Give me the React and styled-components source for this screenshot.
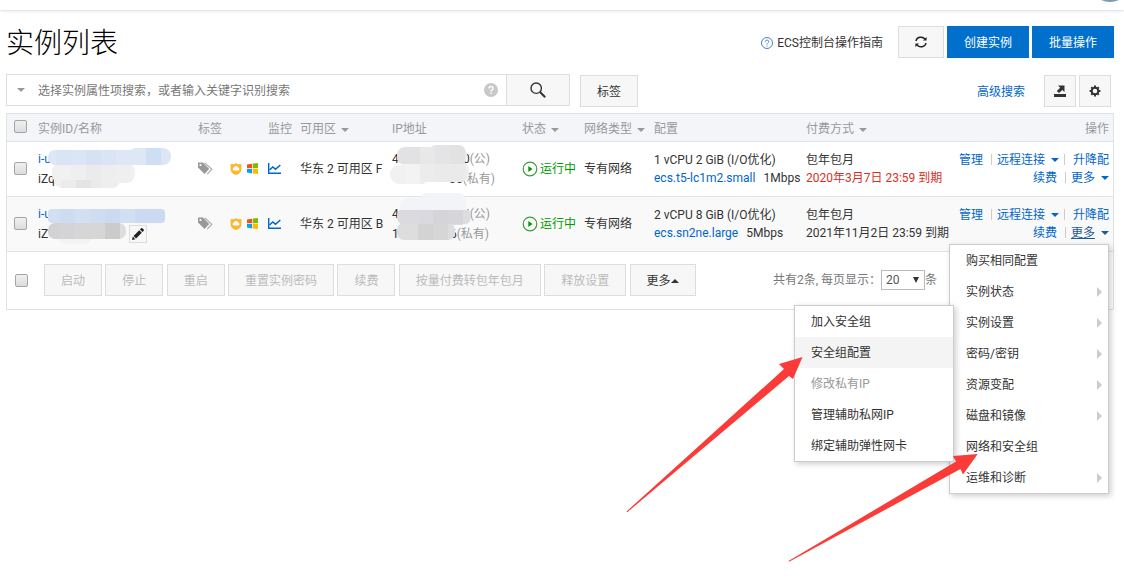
import React from "react";
import styled, { createGlobalStyle, css } from "styled-components";

const Global = createGlobalStyle`
  * { box-sizing: border-box; }
  body {
    margin: 0;
    background: #fff;
    color: #333;
    font: 12px/18px Roboto, "Noto Sans CJK SC", sans-serif;
  }
  button, input, select { font: inherit; color: inherit; margin: 0; }
  button { cursor: pointer; }
  a { color: #06c; text-decoration: none; }
  svg { display: block; flex: none; }
`;

const Shell = styled.div`
  min-height: 100vh;
`;

const TopBar = styled.div`
  display: flex;
  justify-content: flex-end;
  height: 10px;
  padding-right: 4px;
  box-shadow: 0 1px 3px rgba(0, 0, 0, 0.14);
`;

const Page = styled.main`
  padding: 16px 10px 0 6px;
`;

const Header = styled.header`
  display: flex;
  align-items: center;
  height: 32px;
`;

const Title = styled.h1`
  margin: 0 auto 0 0;
  padding-top: 4px;
  font-size: 28px;
  line-height: 32px;
  font-weight: 300;
  color: #000;
`;

const Guide = styled.a`
  display: flex;
  align-items: center;
  gap: 4px;
  margin-right: 15px;
  padding-top: 2px;
  color: #333;
`;

const Button = styled.button`
  display: inline-flex;
  align-items: center;
  justify-content: center;
  height: 32px;
  padding: 2px 16px 0;
  border: 1px solid #ddd;
  border-radius: 0;
  background: #f7f7f7;
  color: #333;
  white-space: nowrap;
  font-family: Roboto, "Noto Sans CJK SC", sans-serif;
  ${(p) => p.$square && css`width: 32px; padding: 0;`}
  ${(p) => p.$wide && css`width: 46px; padding: 0;`}
  ${(p) => p.$primary && css`background: #0070cc; border-color: #0070cc; color: #fff;`}
  &:disabled { color: #bbb; cursor: default; }
`;

const HeaderActions = styled.div`
  display: flex;
  gap: 3px;
`;

const SearchBar = styled.form`
  display: flex;
  align-items: flex-end;
  height: 33px;
  margin: 16px 3px 6px 0;
`;

const SearchBox = styled.div`
  display: flex;
  align-items: center;
  align-self: flex-start;
  flex: 0 1 564px;
  height: 32px;
  border: 1px solid #ddd;
`;

const SearchInput = styled.input`
  flex: 1;
  min-width: 0;
  margin-left: 13px;
  padding: 2px 0 0;
  border: 0;
  outline: 0;
  background: none;
  &::placeholder { color: #777; opacity: 1; }
`;

const SearchButton = styled.button`
  display: flex;
  align-items: center;
  justify-content: center;
  align-self: stretch;
  width: 63px;
  margin-left: 8px;
  padding: 0;
  border: 0;
  border-left: 1px solid #ddd;
  background: #f7f7f7;
`;

const TagSlot = styled.div`
  display: flex;
  margin: 0 auto 0 10px;
`;

const SearchTools = styled.div`
  display: flex;
  align-items: center;
  gap: 3px;
  & > a { margin-right: 16px; padding-top: 2px; }
`;

const Caret = styled.i`
  display: inline-block;
  vertical-align: middle;
  border: 4px solid transparent;
  border-bottom-width: 0;
  border-top-color: ${(p) => p.$color || "currentColor"};
  margin-left: ${(p) => p.$gap || 0}px;
  ${(p) => p.$up && css`
    border-width: 0 4px 4px;
    border-color: transparent transparent currentColor;
  `}
`;

const Check = styled.input.attrs({ type: "checkbox" })`
  appearance: none;
  display: block;
  width: 13px;
  height: 13px;
  margin: 0;
  border: 1px solid #a5a5a5;
  border-radius: 2px;
  background: linear-gradient(#f0f0f0, #dcdcdc);
`;

const Panel = styled.section`
  border: 1px solid #dfe3e8;
`;

const Table = styled.table`
  width: 100%;
  table-layout: fixed;
  border-collapse: collapse;
  th, td {
    padding: 0;
    text-align: left;
    font-weight: normal;
    white-space: nowrap;
    border-bottom: 1px solid #dfe3e8;
  }
  th { height: 27px; padding-top: 3px; color: #999; background: #f4f5f9; }
  td { height: 55px; }
  th:first-child { padding: 0 0 1px 7px; }
  td:first-child { padding-left: 7px; }
  th:last-child, td:last-child { padding-right: 4px; text-align: right; }
`;

const Row = styled.tr`
  background: ${(p) => (p.$active ? "#f9f9f9" : "#fff")};
`;

const Stack = styled.div`
  position: relative;
  line-height: ${(p) => p.$line || 18}px;
`;

const Blur = styled.svg`
  position: absolute;
  top: ${(p) => p.$top || 0}px;
  left: ${(p) => p.$left}px;
`;

const EditButton = styled.button`
  position: absolute;
  left: 91px;
  bottom: 1px;
  display: flex;
  align-items: center;
  justify-content: center;
  width: 18px;
  height: 18px;
  padding: 0;
  border: 1px solid #ddd;
  background: #f7f7f7;
`;

const Gray = styled.span`
  color: #999;
`;

const IpLine = styled.div`
  display: flex;
  width: ${(p) => p.$width}px;
  & > :nth-child(2) { margin-left: auto; }
`;

const Icons = styled.div`
  display: flex;
  align-items: center;
  justify-content: flex-end;
  gap: 5px;
  padding-right: ${(p) => p.$end}px;
  & > :nth-child(3) { margin-left: 5px; }
`;

const Status = styled.div`
  display: flex;
  align-items: center;
  gap: 2px;
  color: #090;
`;

const Expiry = styled.div`
  color: ${(p) => (p.$soon ? "#d93026" : "#333")};
`;

const Spec = styled.div`
  display: flex;
  gap: 8px;
`;

const Actions = styled.div`
  display: flex;
  justify-content: flex-end;
  align-items: center;
`;

const Sep = styled.i`
  width: 1px;
  height: 11px;
  margin: 0 5px 0 ${(p) => p.$before}px;
  background: #ccc;
`;

const MoreLink = styled.a`
  ${(p) => p.$open && css`color: #1f5a94; text-decoration: underline;`}
`;

const MoreSlot = styled.div`
  position: relative;
`;

const Menu = styled.ul`
  position: absolute;
  z-index: 2;
  width: 160px;
  margin: 0;
  padding: 0;
  list-style: none;
  text-align: left;
  color: #333;
  background: #fff;
  border: 1px solid #ccc;
  box-shadow: 2px 2px 6px rgba(0, 0, 0, 0.2);
  ${(p) => (p.$nested ? css`right: calc(100% - 4px); bottom: 0;` : css`right: 0; top: calc(100% + 2px);`)}
`;

const MenuItem = styled.li`
  position: relative;
  display: flex;
  align-items: center;
  justify-content: space-between;
  height: 31px;
  padding: 1px 6px 0 16px;
  color: ${(p) => (p.$disabled ? "#999" : "#333")};
  background: ${(p) => (p.$hover ? "#f4f4f4" : "none")};
`;

const SubArrow = styled.i`
  border: 5px solid transparent;
  border-right-width: 0;
  border-left-color: #ccc;
`;

const Pointer = styled.svg`
  position: absolute;
  z-index: 3;
  fill: #fb3b38;
  pointer-events: none;
  top: ${(p) => p.$top}px;
  right: ${(p) => p.$right}px;
`;

const Footer = styled.footer`
  display: flex;
  align-items: center;
  height: 57px;
  padding: 0 176px 0 8px;
  color: #777;
`;

const Bulk = styled.div`
  margin: 0 auto 0 16px;
  font-family: "Liberation Sans", sans-serif;
  white-space: nowrap;
`;

const PageSize = styled.label`
  display: flex;
  align-items: center;
  white-space: nowrap;
`;

const SelectBox = styled.span`
  position: relative;
  display: flex;
`;

const Select = styled.select`
  appearance: none;
  width: 44px;
  height: 20px;
  padding: 0 4px;
  border: 1px solid #bbb;
  border-radius: 0;
  background: #fff;
  color: #555;
`;

const SelectMark = styled.i`
  position: absolute;
  top: 7px;
  right: 6px;
  border: 3px solid transparent;
  border-top: 6px solid #333;
  border-bottom: 0;
  pointer-events: none;
`;

const HelpIcon = () => (
  <svg width="12" height="12" viewBox="0 0 12 12" fill="none" stroke="#4a7fc9">
    <circle cx="6" cy="6" r="5.5" />
    <path d="M4.3 4.8c0-2.3 3.5-2.2 3.5-.2C7.8 5.9 6 5.8 6 7.5M6 8.5v1" />
  </svg>
);

const HelpSolid = () => (
  <svg width="14" height="14" viewBox="0 0 14 14">
    <circle cx="7" cy="7" r="7" fill="#c8c8c8" />
    <path d="M4.9 5.5c0-2.7 4.2-2.6 4.2-.2C9.1 6.9 7 6.8 7 8.6M7 9.6v1.5" fill="none" stroke="#fff" strokeWidth="1.4" />
  </svg>
);

const RefreshIcon = () => (
  <svg width="12" height="12" viewBox="0 0 12 12" fill="none" stroke="#222" strokeWidth="1.5">
    <path d="M1 5A5 4.4 0 0 1 10 3M11 7A5 4.4 0 0 1 2 9" />
    <path d="M11.6 1v3.6H8zM.4 11V7.4H4z" fill="#222" stroke="none" />
  </svg>
);

const SearchIcon = () => (
  <svg width="16" height="16" viewBox="0 0 16 16" fill="none" stroke="#333">
    <circle cx="6.2" cy="6.2" r="5.2" strokeWidth="1.4" />
    <path d="M10 10l5.2 5.2" strokeWidth="2" />
  </svg>
);

const ExportIcon = () => (
  <svg width="12" height="12" viewBox="0 0 12 12" fill="#333">
    <path d="M0 9h12v3H0zM4 .5h6.5V7L8.4 4.9 5 8 2.8 6l3.4-3.3z" />
  </svg>
);

const GearIcon = () => (
  <svg width="12" height="12" viewBox="0 0 12 12">
    <circle cx="6" cy="6" r="3.3" fill="none" stroke="#333" strokeWidth="2" />
    <g stroke="#333" strokeWidth="2">
      <path d="M6 .6v2M6 9.4v2M.6 6h2M9.4 6h2M2.2 2.2l1.2 1.2M8.6 8.6l1.2 1.2M2.2 9.8l1.2-1.2M8.6 3.4l1.2-1.2" />
    </g>
  </svg>
);

const TagIcon = () => (
  <svg width="15" height="13" viewBox="0 0 15 13">
    <path d="M0 .5h5l6.2 6.6-4.7 5L0 5.6z" fill="#999" />
    <circle cx="2.5" cy="3" r="1.1" fill="#fff" />
    <path d="M6.8 1l7 6.2-4.6 4.9" fill="none" stroke="#a5b1b8" strokeWidth="1.2" />
  </svg>
);

const ShieldIcon = () => (
  <svg width="12" height="12" viewBox="0 0 12 12">
    <path d="M6 0l1.8 1.2L11.4 1v5.4C11.4 9.3 8.5 11 6 12 3.5 11 .6 9.3.6 6.4V1l3.6.2z" fill="#fbb82f" />
    <path d="M3.6 7.5a1.6 1.6 0 0 1 .3-3A2.3 2.3 0 0 1 8.2 4.6a1.5 1.5 0 0 1 .2 2.9z" fill="#fff" />
  </svg>
);

const WindowsIcon = () => (
  <svg width="11" height="11" viewBox="0 0 11 11">
    <path d="M0 1.5l5-.8v4.5H0z" fill="#f25022" />
    <path d="M5.7.6L11 0v5.2H5.7z" fill="#7fba00" />
    <path d="M0 5.9h5v4.5l-5-.8z" fill="#00a4ef" />
    <path d="M5.7 5.9H11V11l-5.3-.6z" fill="#ffb900" />
  </svg>
);

const ChartIcon = () => (
  <svg width="13" height="11" viewBox="0 0 13 11" fill="none" stroke="#06c">
    <path d="M.7 0v10.3H13" strokeWidth="1.4" />
    <path d="M1.5 7l3.3-3 2.7 2.2L12.3 2" strokeWidth="1.5" />
  </svg>
);

const RunIcon = () => (
  <svg width="16" height="16" viewBox="0 0 16 16">
    <circle cx="8" cy="8" r="6.8" fill="none" stroke="#3a9d3a" strokeWidth="1.2" />
    <path d="M6.3 5l4.2 3-4.2 3z" fill="#090" />
  </svg>
);

const PencilIcon = () => (
  <svg width="12" height="12" viewBox="0 0 12 12" fill="#222">
    <path d="M0 12l.8-3.4 2.6 2.6zM1.5 7.9l5.7-5.7 2.6 2.6-5.7 5.7zM7.9 1.5L9.2.2q.6-.4 1.2.1l1.3 1.3q.5.6 0 1.2l-1.2 1.3z" />
  </svg>
);

/* Mosaic strokes that hide parts of an instance's id and address */
function Mosaic({ shapes, tiles, id, width, height, left, top }) {
  return (
    <Blur width={width} height={height} $left={left} $top={top} aria-hidden="true">
      <clipPath id={id}>
        {shapes.map(([x, y, w, h, r], i) => (
          <rect key={i} x={x} y={y} width={w} height={h} rx={r} />
        ))}
      </clipPath>
      <g clipPath={`url(#${id})`}>
        {tiles.map(([x, y, w, h, fill], i) => (
          <rect key={i} x={x} y={y} width={w} height={h} fill={fill} />
        ))}
      </g>
    </Blur>
  );
}

const band = (x, y, w, h, colors) => colors.map((c, i) => [x + i * w, y, w, h, c]);

const instances = [
  {
    id: "i-u", name: "iZq", zone: "华东 2 可用区 F",
    pub: ["4.", "0"], priv: ["", "36"], ipWidth: [98, 103],
    cpu: "1 vCPU 2 GiB (I/O优化)", spec: "ecs.t5-lc1m2.small", net: "1Mbps",
    expiry: "2020年3月7日 23:59 到期", soon: true,
    idMask: {
      width: 124, height: 42, left: 10, top: -1,
      shapes: [[0, 2, 118, 15, 7], [80, 0, 43, 17, 8], [4, 15, 83, 20, 8], [6, 20, 66, 20, 8]],
      tiles: [
        ...band(-7, 0, 15, 17, ["#dfe7f5", "#d9e5f5", "#dce5f5", "#d6e2f3", "#dbe4f5", "#dfe6f5", "#dee7f5", "#cfdff3", "#dce6f5", "#f3f8fd"]),
        ...band(-7, 17, 15, 26, ["#f0f0f0", "#f1f1f1", "#efefef", "#ebebec", "#eeeeee", "#efefef", "#f1f1f1"]),
        [13, 32, 15, 10, "#ebebeb"],
        [28, 32, 15, 10, "#e4e4e5"],
      ],
    },
    ipMask: {
      width: 82, height: 42, left: -2, top: -4,
      shapes: [[7, 2, 70, 18, 8], [38, 0, 38, 18, 8], [0, 20, 40, 19, 9], [10, 17, 69, 20, 8]],
      tiles: [
        ...band(0, 0, 15, 19, ["#e2e2e4", "#e2e2e4", "#e8e8e9", "#e4e4e6", "#e2e2e3", "#ebebec"]),
        ...band(0, 19, 15, 22, ["#f1f1f1", "#f3f3f3", "#ececed", "#eaeaea", "#eaeaea", "#eeeeee"]),
      ],
    },
  },
  {
    id: "i-u", name: "iZ", zone: "华东 2 可用区 B", active: true,
    pub: ["4", "4"], priv: ["1", "6"], ipWidth: [98, 97],
    cpu: "2 vCPU 8 GiB (I/O优化)", spec: "ecs.sn2ne.large", net: "5Mbps",
    expiry: "2021年11月2日 23:59 到期",
    idMask: {
      width: 117, height: 40, left: 10, top: 5,
      shapes: [[0, 0, 117, 14, 4], [0, 14, 78, 16, 7], [10, 18, 34, 17, 8]],
      tiles: [
        ...band(-3, 0, 15, 14, ["#d2def2", "#cedcf1", "#d3e0f3", "#ceddf2", "#cbdaf1", "#d2dff3", "#cbdaf0", "#cbdaf0", "#cddbf0"]),
        ...band(-3, 14, 15, 16, ["#d2d2d4", "#d4d4d6", "#d6d6d7", "#d6d6d7", "#cbcbcc", "#dddddf"]),
        [0, 30, 50, 8, "#f3f3f3"],
      ],
    },
    ipMask: {
      width: 80, height: 48, left: 4, top: -11,
      shapes: [[24, 0, 46, 24, 8], [4, 5, 30, 20, 9], [1, 15, 74, 17, 8], [1, 30, 58, 17, 7]],
      tiles: [
        [0, 0, 80, 17, "#f3f4f7"],
        ...band(-8, 17, 15, 14, ["#dadadf", "#dadadf", "#d9d9df", "#d4d4d9", "#d6d6da", "#dddddf"]),
        ...band(-8, 31, 15, 16, ["#dddddf", "#dddddd", "#d3d3d4", "#d6d6d7", "#dddde0"]),
      ],
    },
  },
];

const columns = [
  ["check", 31], ["id", 160], ["tag", 32], ["monitor", 70], ["zone", 92], ["ip", 130],
  ["status", 62], ["net", 70], ["config", 152], ["pay", 149], ["ops", 158],
];

const bulkActions = ["启动", "停止", "重启", "重置实例密码", "续费", "按量付费转包年包月", "释放设置"];

function SecurityMenu() {
  return (
    <Menu $nested>
      <MenuItem>加入安全组</MenuItem>
      <MenuItem $hover>
        安全组配置
        <Pointer width="177" height="156" $top={20} $right={150} aria-hidden="true">
          <path d="M176.5 0L153 7l5 5L.5 154.500l.8.7L163 19l4 3z" />
        </Pointer>
      </MenuItem>
      <MenuItem $disabled>修改私有IP</MenuItem>
      <MenuItem>管理辅助私网IP</MenuItem>
      <MenuItem>绑定辅助弹性网卡</MenuItem>
    </Menu>
  );
}

function MoreMenu() {
  return (
    <Menu>
      <MenuItem>购买相同配置</MenuItem>
      {["实例状态", "实例设置", "密码/密钥", "资源变配", "磁盘和镜像"].map((t) => (
        <MenuItem key={t}>{t}<SubArrow /></MenuItem>
      ))}
      <MenuItem>
        网络和安全组
        <SecurityMenu />
        <Pointer width="190" height="108" $top={23} $right={130} aria-hidden="true">
          <path d="M189.7 0L165 2l3 5.5L.5 107l.6.8L172.5 15l2.5 5.500z" />
        </Pointer>
      </MenuItem>
      <MenuItem>运维和诊断<SubArrow /></MenuItem>
    </Menu>
  );
}

function InstanceRow({ item, index }) {
  return (
    <Row $active={item.active}>
      <td><Check aria-label={`选择实例 ${index + 1}`} /></td>
      <td>
        <Stack $line={20}>
          <a href="#instance">{item.id}</a>
          <div>{item.name}</div>
          <Mosaic id={`id-mask-${index}`} {...item.idMask} />
          {item.active && <EditButton aria-label="编辑名称"><PencilIcon /></EditButton>}
        </Stack>
      </td>
      <td><TagIcon /></td>
      <td><Icons $end={19}><ShieldIcon /><WindowsIcon /><ChartIcon /></Icons></td>
      <td>{item.zone}</td>
      <td>
        <Stack $line={20}>
          <IpLine $width={item.ipWidth[0]}><span>{item.pub[0]}</span><span>{item.pub[1]}<Gray>(公)</Gray></span></IpLine>
          <IpLine $width={item.ipWidth[1]}><span>{item.priv[0]}</span><span>{item.priv[1]}<Gray>(私有)</Gray></span></IpLine>
          <Mosaic id={`ip-mask-${index}`} {...item.ipMask} />
        </Stack>
      </td>
      <td><Status><RunIcon />运行中</Status></td>
      <td>专有网络</td>
      <td>
        <Stack>
          {item.cpu}
          <Spec><a href="#spec">{item.spec}</a><span>{item.net}</span></Spec>
        </Stack>
      </td>
      <td>
        <Stack>
          包年包月
          <Expiry $soon={item.soon}>{item.expiry}</Expiry>
        </Stack>
      </td>
      <td>
        <Actions>
          <a href="#manage">管理</a><Sep $before={8} />
          <a href="#connect">远程连接<Caret $gap={6} /></a><Sep $before={5} />
          <a href="#resize">&nbsp;升降配</a>
        </Actions>
        <MoreSlot>
          <Actions>
            <a href="#renew">续费</a><Sep $before={8} />
            <MoreLink href="#more" $open={item.active}>更多<Caret $gap={6} /></MoreLink>
          </Actions>
          {item.active && <MoreMenu />}
        </MoreSlot>
      </td>
    </Row>
  );
}

export default function App() {
  return (
    <Shell>
      <Global />
      <TopBar>
        <svg width="20" height="2" viewBox="0 0 20 2"><path d="M1 0h18Q10 4 1 0z" fill="#7b9bb5" /></svg>
      </TopBar>
      <Page>
        <Header>
          <Title>实例列表</Title>
          <Guide href="#guide"><HelpIcon />ECS控制台操作指南</Guide>
          <HeaderActions>
            <Button $wide aria-label="刷新"><RefreshIcon /></Button>
            <Button $primary>创建实例</Button>
            <Button $primary>批量操作</Button>
          </HeaderActions>
        </Header>
        <SearchBar onSubmit={(e) => e.preventDefault()}>
          <SearchBox>
            <Caret $color="#999" $gap={10} />
            <SearchInput aria-label="搜索" placeholder="选择实例属性项搜索，或者输入关键字识别搜索" />
            <HelpSolid />
            <SearchButton aria-label="搜索"><SearchIcon /></SearchButton>
          </SearchBox>
          <TagSlot><Button type="button">标签</Button></TagSlot>
          <SearchTools>
            <a href="#advanced">高级搜索</a>
            <Button type="button" $square aria-label="导出"><ExportIcon /></Button>
            <Button type="button" $square aria-label="设置"><GearIcon /></Button>
          </SearchTools>
        </SearchBar>
        <Panel>
          <Table>
            <colgroup>
              {columns.map(([k, w]) => <col key={k} width={w} />)}
            </colgroup>
            <thead>
              <tr>
                <th><Check aria-label="全选" /></th>
                <th>实例ID/名称</th>
                <th>标签</th>
                <th><Icons $end={8}>监控</Icons></th>
                <th>可用区<Caret $gap={5} /></th>
                <th>IP地址</th>
                <th>状态<Caret $gap={5} /></th>
                <th>网络类型<Caret $gap={5} /></th>
                <th>配置</th>
                <th>付费方式<Caret $gap={5} /></th>
                <th>操作</th>
              </tr>
            </thead>
            <tbody>
              {instances.map((item, i) => <InstanceRow key={i} item={item} index={i} />)}
            </tbody>
          </Table>
          <Footer>
            <Check aria-label="全选本页" />
            <Bulk>
              {bulkActions.map((t) => <React.Fragment key={t}><Button disabled>{t}</Button>{" "}</React.Fragment>)}
              <Button>更多<Caret $up /></Button>
            </Bulk>
            <PageSize>
              共有2条, 每页显示：
              <SelectBox>
                <Select defaultValue="20"><option>20</option><option>50</option></Select>
                <SelectMark />
              </SelectBox>
              条
            </PageSize>
          </Footer>
        </Panel>
      </Page>
    </Shell>
  );
}
